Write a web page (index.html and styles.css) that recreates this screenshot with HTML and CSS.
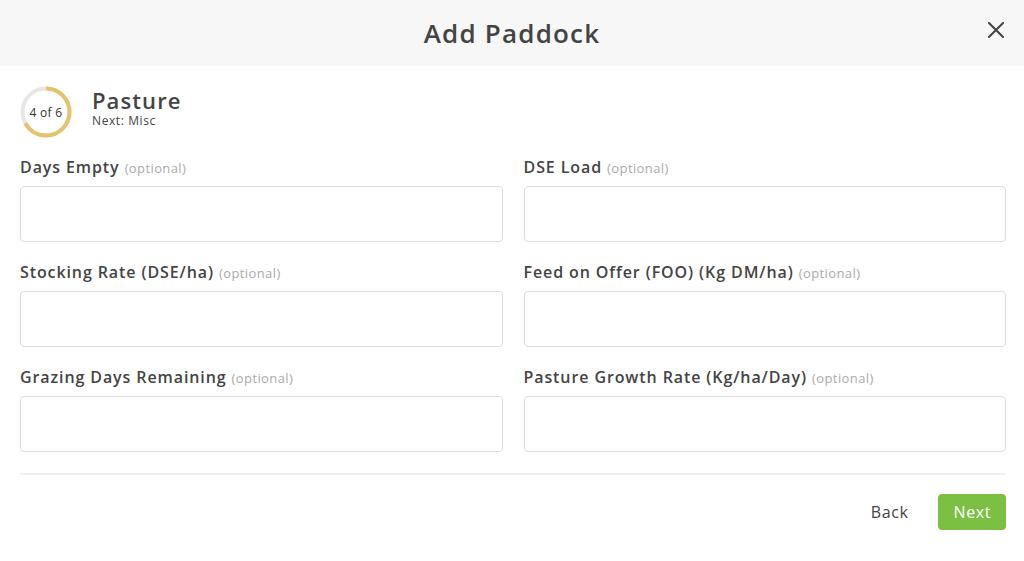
FILE: index.html
```
<!DOCTYPE html>
<html lang="en">
<head>
    <meta charset="UTF-8">
    <meta name="viewport" content="width=device-width, initial-scale=1.0">
    <title>Add Paddock</title>
    <link rel="stylesheet" href="styles.css">
</head>
<body>

<div class="modal">
    <div class="modal-header">
        <h2>Add Paddock</h2>
        <button class="close" aria-label="Close">
            <svg width="16" height="16" viewBox="0 0 16 16">
                <path d="M1 1 L15 15 M15 1 L1 15" stroke="#444" stroke-width="2" stroke-linecap="square" fill="none"/>
            </svg>
        </button>
    </div>

    <div class="modal-body">
        <div class="step">
            <div class="step-ring">
                <svg width="52" height="52" viewBox="0 0 52 52">
                    <circle cx="26" cy="26" r="23.5" fill="none" stroke="#e6e6e6" stroke-width="4"/>
                    <circle cx="26" cy="26" r="23.5" fill="none" stroke="#e5c36b" stroke-width="4"
                            stroke-dasharray="98.4 147.7" transform="rotate(-90 26 26)"/>
                </svg>
                <span>4 of 6</span>
            </div>
            <div class="step-text">
                <h3>Pasture</h3>
                <p>Next: Misc</p>
            </div>
        </div>

        <div class="fields">
            <div class="field">
                <label>Days Empty <span>(optional)</span></label>
                <input type="text">
            </div>
            <div class="field">
                <label>DSE Load <span>(optional)</span></label>
                <input type="text">
            </div>
            <div class="field">
                <label>Stocking Rate (DSE/ha) <span>(optional)</span></label>
                <input type="text">
            </div>
            <div class="field">
                <label>Feed on Offer (FOO) (Kg DM/ha) <span>(optional)</span></label>
                <input type="text">
            </div>
            <div class="field">
                <label>Grazing Days Remaining <span>(optional)</span></label>
                <input type="text">
            </div>
            <div class="field">
                <label>Pasture Growth Rate (Kg/ha/Day) <span>(optional)</span></label>
                <input type="text">
            </div>
        </div>

        <div class="footer">
            <button class="back">Back</button>
            <button class="next">Next</button>
        </div>
    </div>
</div>

</body>
</html>
```

FILE: styles.css
```
body {
    margin: 0;
    background: #fff;
    color: #444;
    font-family: "Open Sans", sans-serif;
}

.modal-header {
    position: relative;
    height: 66px;
    background: #f7f7f7;
    display: flex;
    justify-content: center;
    align-items: center;
}

.modal-header h2 {
    margin: 0;
    font-size: 26px;
    font-weight: 600;
    letter-spacing: 1.2px;
    color: #444;
}

.close {
    position: absolute;
    right: 20px;
    top: 22px;
    background: none;
    border: none;
    padding: 0;
    cursor: pointer;
    line-height: 0;
}

.modal-body {
    padding: 20px 18px 0 20px;
}

.step {
    display: flex;
    align-items: center;
    gap: 20px;
}

.step-ring {
    position: relative;
    width: 52px;
    height: 52px;
}

.step-ring svg {
    display: block;
}

.step-ring span {
    position: absolute;
    inset: 0;
    display: flex;
    justify-content: center;
    align-items: center;
    font-size: 12px;
    letter-spacing: 0.3px;
    color: #333;
}

.step-text {
    margin-top: -8px;
}

.step-text h3 {
    margin: 0;
    font-size: 22px;
    font-weight: 600;
    letter-spacing: 1.1px;
    color: #444;
    line-height: 24px;
}

.step-text p {
    margin: 2px 0 0;
    font-size: 12px;
    letter-spacing: 0.6px;
    line-height: 14px;
    color: #444;
}

.fields {
    display: grid;
    grid-template-columns: 1fr 1fr;
    column-gap: 21px;
    row-gap: 19px;
    margin-top: 18px;
}

.field label {
    display: block;
    font-size: 16px;
    font-weight: 600;
    letter-spacing: 0.9px;
    color: #444;
    margin-bottom: 7px;
    line-height: 22px;
}

.field label span {
    font-size: 13px;
    font-weight: 400;
    letter-spacing: 0.4px;
    color: #aaa;
}

.field input {
    display: block;
    box-sizing: border-box;
    width: 100%;
    height: 56px;
    border: 1px solid #ddd;
    border-radius: 4px;
    font-size: 15px;
    padding: 0 12px;
}

.footer {
    margin-top: 21px;
    border-top: 2px solid #f0f0f0;
    padding-top: 19px;
    display: flex;
    justify-content: flex-end;
    gap: 10px;
}

.footer button {
    font-family: inherit;
    font-size: 16px;
    letter-spacing: 0.6px;
    height: 36px;
    border-radius: 4px;
    border: none;
    cursor: pointer;
}

.back {
    background: none;
    color: #444;
    padding: 0 20px;
}

.next {
    background: #7bc043;
    color: #fff;
    padding: 0 15px;
}
```
